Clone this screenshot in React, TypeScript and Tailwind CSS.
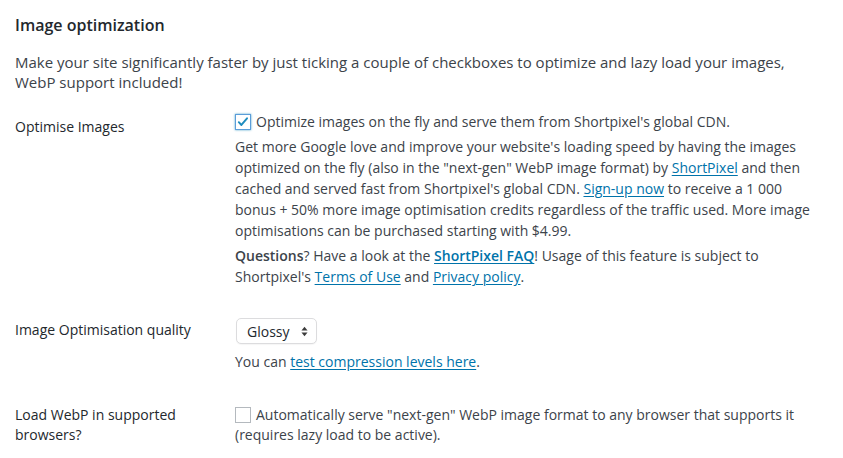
import { useState } from "react";

const FONT = "font-['Open_Sans','Liberation_Sans',sans-serif]";

function Checkbox({ checked, focused }: { checked: boolean; focused?: boolean }) {
  return (
    <span
      className={`inline-flex w-4 h-4 shrink-0 items-center justify-center bg-white border ${
        focused
          ? "border-[#5b9dd9] shadow-[0_0_2px_rgba(30,140,190,0.8)]"
          : "border-[#b4b9be]"
      }`}
    >
      {checked && (
        <svg viewBox="0 0 16 16" className="w-[14px] h-[14px]">
          <path
            d="M3.2 8.2l3 3.2 6.4-7.6"
            fill="none"
            stroke="#1e8cbe"
            strokeWidth={2.2}
            strokeLinecap="round"
            strokeLinejoin="round"
          />
        </svg>
      )}
    </span>
  );
}

function Link({ children, bold }: { children: React.ReactNode; bold?: boolean }) {
  return (
    <a
      href="#"
      className={`text-[#0073aa] underline underline-offset-2 ${bold ? "font-semibold" : ""}`}
    >
      {children}
    </a>
  );
}

export default function App() {
  const [optimize] = useState(true);
  const [webp] = useState(false);

  return (
    <div className={`${FONT} bg-white min-h-screen px-[15px] text-[14px] text-[#3c434a]`}>
      <h2 className="pt-[13px] text-[16px] leading-[24px] font-semibold text-[#23282d]">
        Image optimization
      </h2>
      <p className="mt-[15px] text-[15px] leading-[20px]">
        Make your site significantly faster by just ticking a couple of checkboxes to optimize and lazy load your images,
        <br />
        WebP support included!
      </p>

      {/* Optimise images */}
      <div className="flex mt-[19px]">
        <div className="w-[220px] shrink-0 pt-[6px] leading-[20px] text-[#23282d]">Optimise Images</div>
        <div className="flex-1">
          <label className="flex items-center gap-[5px] leading-[21px]">
            <Checkbox checked={optimize} focused />
            <span>Optimize images on the fly and serve them from Shortpixel's global CDN.</span>
          </label>
          <p className="mt-[4px] leading-[21px]">
            Get more Google love and improve your website's loading speed by having the images
            <br />
            optimized on the fly (also in the "next-gen" WebP image format) by <Link>ShortPixel</Link> and then
            <br />
            cached and served fast from Shortpixel's global CDN. <Link>Sign-up now</Link> to receive a 1 000
            <br />
            bonus + 50% more image optimisation credits regardless of the traffic used. More image
            <br />
            optimisations can be purchased starting with $4.99.
          </p>
          <p className="mt-[4px] leading-[21px]">
            <strong className="font-semibold">Questions</strong>? Have a look at the{" "}
            <Link bold>ShortPixel FAQ</Link>! Usage of this feature is subject to
            <br />
            Shortpixel's <Link>Terms of Use</Link> and <Link>Privacy policy</Link>.
          </p>
        </div>
      </div>

      {/* Quality */}
      <div className="flex mt-[31px]">
        <div className="w-[220px] shrink-0 pt-[2px] leading-[20px] text-[#23282d]">Image Optimisation quality</div>
        <div className="flex-1">
          <div className="ml-[1px] w-[81px] h-[26px] flex items-center justify-between pl-[10px] pr-[8px] bg-white border border-[#dcdcde] rounded-[5px] shadow-[0_1px_1px_rgba(0,0,0,0.04)] text-[#23282d]">
            <span>Glossy</span>
            <svg viewBox="0 0 8 12" className="w-[7px] h-[11px]">
              <path d="M4 0.5L7.5 4.8H0.5Z" fill="#3c3c3c" />
              <path d="M4 11.5L7.5 7.2H0.5Z" fill="#3c3c3c" />
            </svg>
          </div>
          <p className="mt-[7px] leading-[21px]">
            You can <Link>test compression levels here</Link>.
          </p>
        </div>
      </div>

      {/* WebP */}
      <div className="flex mt-[33px]">
        <div className="w-[220px] shrink-0 leading-[19.5px] text-[#23282d]">
          Load WebP in supported
          <br />
          browsers?
        </div>
        <div className="flex-1 leading-[20px]">
          <label className="flex items-center gap-[5px]">
            <Checkbox checked={webp} />
            <span>Automatically serve "next-gen" WebP image format to any browser that supports it</span>
          </label>
          <p>(requires lazy load to be active).</p>
        </div>
      </div>
    </div>
  );
}
